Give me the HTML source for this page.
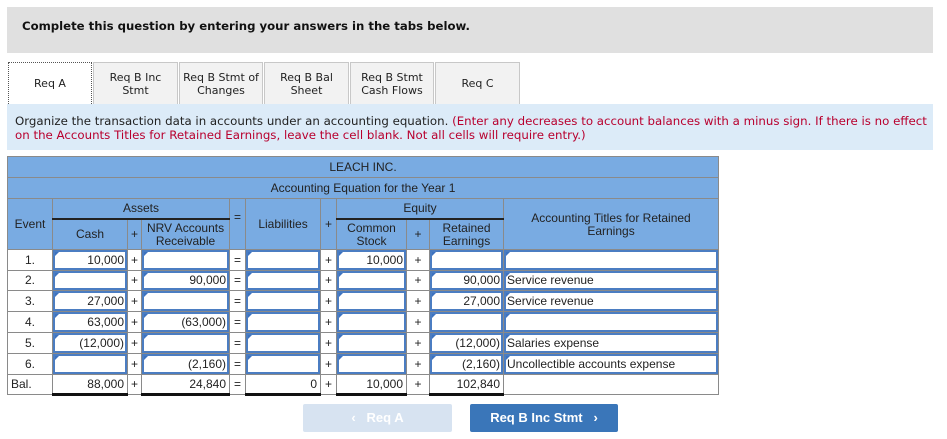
<!DOCTYPE html>
<html><head><meta charset="utf-8">
<style>
body{margin:0;width:947px;height:439px;background:#fff;font-family:"DejaVu Sans",Verdana,sans-serif;position:relative;overflow:hidden}
.top{position:absolute;left:7px;top:7px;width:926px;height:46px;background:#e0e0e0}
.top b{position:absolute;left:15px;top:12px;font-size:11.7px;color:#111}
.tab{position:absolute;top:62px;height:42px;background:#f2f2f2;border:1px solid #c8c8c8;border-bottom:none;box-sizing:border-box;font-size:11px;text-align:center;display:flex;align-items:center;justify-content:center;line-height:13px;color:#222}
.tab.a{background:#fff;border:1px dotted #555;border-bottom:none}
.inst{position:absolute;left:7px;top:104px;width:926px;height:46px;background:#dcebf8;font-size:11.8px;line-height:14px;padding:10px 0 0 8px;box-sizing:border-box;color:#222}
.inst span{color:#b8002e}
table{position:absolute;left:7px;top:156px;border-collapse:collapse;table-layout:fixed;font-family:"Liberation Sans",Arial,sans-serif;font-size:12px;color:#222}
td{border:1px solid #8a8a8a;padding:0 3px;height:20.8px;box-sizing:border-box;white-space:nowrap;overflow:hidden}
.h td{background:#79abe2;text-align:center;line-height:13px}
.c{text-align:center}
.r{text-align:right}
td.i{box-shadow:inset 0 0 0 2px #4b7dc2;position:relative;text-align:right}
td.i::before{content:"";position:absolute;left:2px;top:2px;border-left:4px solid #3d73c0;border-bottom:4px solid transparent}
td.t{text-align:left}
.bal td.u{border-bottom:3px solid #111}
.btn{position:absolute;top:404px;height:28px;border-radius:2px;font-family:"Liberation Sans",Arial,sans-serif;font-weight:bold;font-size:13px;color:#fff;text-align:center;line-height:28px}
</style></head><body>
<div class="top"><b>Complete this question by entering your answers in the tabs below.</b></div>
<div class="tab a" style="left:8px;width:84px">Req A</div>
<div class="tab" style="left:93px;width:85px">Req B Inc<br>Stmt</div>
<div class="tab" style="left:179px;width:84px">Req B Stmt of<br>Changes</div>
<div class="tab" style="left:264px;width:85px">Req B Bal<br>Sheet</div>
<div class="tab" style="left:350px;width:84px">Req B Stmt<br>Cash Flows</div>
<div class="tab" style="left:435px;width:85px">Req C</div>
<div class="inst">Organize the transaction data in accounts under an accounting equation. <span>(Enter any decreases to account balances with a minus sign. If there is no effect on the Accounts Titles for Retained Earnings, leave the cell blank. Not all cells will require entry.)</span></div>
<table>
<colgroup><col style="width:45px"><col style="width:75px"><col style="width:14px"><col style="width:88px"><col style="width:16px"><col style="width:75px"><col style="width:16px"><col style="width:70px"><col style="width:23px"><col style="width:74px"><col style="width:215px"></colgroup>
<tr class="h"><td colspan="11" style="height:21px">LEACH INC.</td></tr>
<tr class="h"><td colspan="11" style="height:21px">Accounting Equation for the Year 1</td></tr>
<tr class="h"><td rowspan="2" style="vertical-align:top;padding-top:19px">Event</td><td colspan="3" style="height:20px;border-bottom:2px solid #222">Assets</td><td rowspan="2" style="vertical-align:top;padding-top:12px">=</td><td rowspan="2" style="vertical-align:top;padding-top:19px">Liabilities</td><td rowspan="2" style="vertical-align:top;padding-top:19px">+</td><td colspan="3" style="border-bottom:2px solid #222">Equity</td><td rowspan="2" style="vertical-align:top;padding-top:13px;white-space:normal">Accounting Titles for Retained Earnings</td></tr>
<tr class="h"><td style="height:30px">Cash</td><td>+</td><td>NRV Accounts<br>Receivable</td><td>Common<br>Stock</td><td>+</td><td>Retained<br>Earnings</td></tr>
<tr><td class="c">1.</td><td class="i">10,000</td><td class="c">+</td><td class="i"></td><td class="c">=</td><td class="i"></td><td class="c">+</td><td class="i">10,000</td><td class="c">+</td><td class="i"></td><td class="i t"></td></tr>
<tr><td class="c">2.</td><td class="i"></td><td class="c">+</td><td class="i">90,000</td><td class="c">=</td><td class="i"></td><td class="c">+</td><td class="i"></td><td class="c">+</td><td class="i">90,000</td><td class="i t">Service revenue</td></tr>
<tr><td class="c">3.</td><td class="i">27,000</td><td class="c">+</td><td class="i"></td><td class="c">=</td><td class="i"></td><td class="c">+</td><td class="i"></td><td class="c">+</td><td class="i">27,000</td><td class="i t">Service revenue</td></tr>
<tr><td class="c">4.</td><td class="i">63,000</td><td class="c">+</td><td class="i">(63,000)</td><td class="c">=</td><td class="i"></td><td class="c">+</td><td class="i"></td><td class="c">+</td><td class="i"></td><td class="i t"></td></tr>
<tr><td class="c">5.</td><td class="i">(12,000)</td><td class="c">+</td><td class="i"></td><td class="c">=</td><td class="i"></td><td class="c">+</td><td class="i"></td><td class="c">+</td><td class="i">(12,000)</td><td class="i t">Salaries expense</td></tr>
<tr><td class="c">6.</td><td class="i"></td><td class="c">+</td><td class="i">(2,160)</td><td class="c">=</td><td class="i"></td><td class="c">+</td><td class="i"></td><td class="c">+</td><td class="i">(2,160)</td><td class="i t">Uncollectible accounts expense</td></tr>
<tr class="bal"><td>Bal.</td><td class="r u">88,000</td><td class="c">+</td><td class="r u">24,840</td><td class="c">=</td><td class="r u">0</td><td class="c">+</td><td class="r u">10,000</td><td class="c">+</td><td class="r u">102,840</td><td></td></tr>
</table>
<div class="btn" style="left:303px;width:149px;background:#d7e3f1">&#8249;&nbsp;&nbsp; Req A</div>
<div class="btn" style="left:470px;width:148px;background:#3a76b9">Req B Inc Stmt &nbsp; &#8250;</div>
</body></html>
